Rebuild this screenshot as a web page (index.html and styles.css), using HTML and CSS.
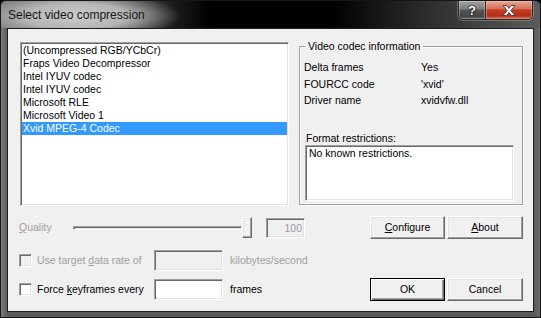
FILE: index.html
```html
<!DOCTYPE html>
<html lang="en">
<head>
    <meta charset="UTF-8">
    <title>Select video compression</title>
    <link rel="stylesheet" href="styles.css">
</head>
<body>
    <div class="window">
        <div class="titlebar">
            <span class="title">Select video compression</span>
            <div class="caption-btns">
                <span class="cap-btn help">?</span>
                <span class="cap-btn close">
                    <svg width="14" height="11" viewBox="0 0 14 11">
                        <path d="M1 0.5h3.6l2.4 2.9 2.4-2.9h3.6l-4.1 5 4.1 5h-3.6l-2.4-2.9-2.4 2.9H1l4.1-5z" fill="#fff" stroke="#3a2a26" stroke-width="0.8"/>
                    </svg>
                </span>
            </div>
        </div>
        <div class="frame">
            <div class="client">
                <div class="top">
                    <ul class="listbox">
                        <li>(Uncompressed RGB/YCbCr)</li>
                        <li>Fraps Video Decompressor</li>
                        <li>Intel IYUV codec</li>
                        <li>Intel IYUV codec</li>
                        <li>Microsoft RLE</li>
                        <li>Microsoft Video 1</li>
                        <li class="selected">Xvid MPEG-4 Codec</li>
                    </ul>
                    <div class="group">
                        <div class="group-title">Video codec information</div>
                        <div class="info">
                            <span>Delta frames</span><span>Yes</span>
                            <span>FOURCC code</span><span>'xvid'</span>
                            <span>Driver name</span><span>xvidvfw.dll</span>
                        </div>
                        <div class="restr-label">Format restrictions:</div>
                        <div class="edit restr-box">No known restrictions.</div>
                    </div>
                </div>

                <div class="row row-quality">
                    <span class="quality off-text"><u>Q</u>uality</span>
                    <div class="slider">
                        <div class="track"></div>
                        <div class="thumb"></div>
                    </div>
                    <div class="edit off num">100</div>
                    <div class="btns">
                        <button class="btn"><u>C</u>onfigure</button>
                        <button class="btn"><u>A</u>bout</button>
                    </div>
                </div>

                <div class="row row-rate">
                    <span class="edit off check"></span>
                    <span class="cb-label off-text">Use target <u>d</u>ata rate of</span>
                    <div class="edit off wide"></div>
                    <span class="unit off-text">kilobytes/second</span>
                </div>

                <div class="row row-key">
                    <span class="edit check"></span>
                    <span class="cb-label">Force <u>k</u>eyframes every</span>
                    <div class="edit wide"></div>
                    <span class="unit">frames</span>
                    <div class="btns">
                        <button class="btn btn-default">OK</button>
                        <button class="btn">Cancel</button>
                    </div>
                </div>
            </div>
        </div>
    </div>
</body>
</html>
```

FILE: styles.css
```css
*{
    margin: 0;
    padding: 0;
    box-sizing: border-box;
}
body{
    font-family: "Liberation Sans", Arial, sans-serif;
    font-size: 10.5px;
    color: #000;
    background: #000;
}
.window{
    width: 541px;
    height: 318px;
    border: 1px solid #161616;
    border-radius: 6px 6px 0 0;
    overflow: hidden;
    display: flex;
    flex-direction: column;
    background: #5e5e5e;
}

/* title bar */
.titlebar{
    height: 27px;
    display: flex;
    align-items: flex-start;
    padding: 0 7px;
    background:
        radial-gradient(ellipse 105px 26px at 74px 15px, #cdcdcd 0%, #b4b4b4 50%, rgba(0,0,0,0) 100%),
        linear-gradient(to right, #6e6e6e 0, #2c2c2c 150px, #000 210px, #000 330px, #2a2a2a 420px, #5c5c5c 100%);
}
.title{
    font-size: 12px;
    line-height: 16px;
    margin-top: 6px;
    color: #141414;
}
.caption-btns{
    margin-left: auto;
    display: flex;
    height: 19px;
    border: 1px solid #262626;
    border-top: none;
    border-radius: 0 0 5px 5px;
    overflow: hidden;
    box-shadow: 0 0 0 1px rgba(255,255,255,0.25);
}
.cap-btn{
    display: flex;
    align-items: center;
    justify-content: center;
    height: 100%;
}
.help{
    width: 27px;
    border-right: 1px solid #2a2a2a;
    background: linear-gradient(#a2a2a2 0%, #7c7c7c 45%, #545454 50%, #464646 85%, #5e5e5e 100%);
    box-shadow: inset 0 0 0 1px rgba(255,255,255,0.3);
    color: #fff;
    font-weight: bold;
    font-size: 13px;
    text-shadow: 0 0 1px #000, 0 0 1px #000, 0 0 2px #000;
}
.close{
    width: 46px;
    background: linear-gradient(#e7a596 0%, #d6705b 42%, #c43a20 50%, #b3301a 80%, #d8654d 100%);
    box-shadow: inset 0 0 0 1px rgba(255,220,210,0.35);
}

/* frame + client */
.frame{
    flex: 1;
    display: flex;
    padding: 0 6px 5px;
    background: linear-gradient(to right, #7c7c7c, #5a5a5a 6px, #5a5a5a calc(100% - 6px), #6c6c6c);
}
.client{
    flex: 1;
    display: flex;
    flex-direction: column;
    border: 1px solid #1c1c1c;
    background: #f0f0f0;
}
.top{
    display: flex;
    align-items: flex-start;
    gap: 10px;
    padding: 13px 0 0 12px;
}

/* sunken 3d edge */
.edit{
    background: #fff;
    border: 1px solid;
    border-color: #a0a0a0 #fff #fff #a0a0a0;
    box-shadow: inset 1px 1px #696969, inset -1px -1px #e3e3e3;
}
.edit.off{
    background: #f0f0f0;
}

.listbox{
    list-style: none;
    width: 269px;
    height: 164px;
    padding: 1px;
    background: #fff;
    border: 1px solid;
    border-color: #a0a0a0 #fff #fff #a0a0a0;
    box-shadow: inset 1px 1px #696969, inset -1px -1px #e3e3e3;
}
.listbox li{
    height: 13px;
    line-height: 13px;
    padding-left: 1px;
    white-space: nowrap;
}
.listbox li.selected{
    background: #3399ff;
    color: #fff;
}

.group{
    width: 224px;
    height: 159px;
    margin-top: 4px;
    padding: 0 4px;
    border: 1px solid #a0a0a0;
    box-shadow: inset 1px 1px #fff, 1px 1px #fff;
}
.group-title{
    width: fit-content;
    margin: -7px 0 0 1px;
    padding: 0 3px;
    line-height: 13px;
    background: #f0f0f0;
}
.info{
    display: grid;
    grid-template-columns: 117px auto;
    line-height: 16.5px;
    margin-top: 6px;
}
.restr-label{
    margin-top: 23px;
    padding-left: 2px;
    line-height: 13px;
}
.restr-box{
    width: 209px;
    height: 56px;
    margin-left: 1px;
    padding: 1px 3px;
    line-height: 13px;
}

/* bottom rows */
.row{
    display: flex;
    align-items: center;
    padding: 0 10px 0 11px;
    line-height: 13px;
    white-space: nowrap;
}
.row-quality{
    height: 23px;
    margin-top: 10px;
}
.row-rate{
    height: 21px;
    margin-top: 11px;
}
.row-key{
    height: 23px;
    margin-top: 7px;
}
.off-text{
    color: #a0a0a0;
}
.quality{
    width: 54px;
}
.slider{
    width: 178.5px;
    height: 21px;
    display: flex;
    align-items: center;
}
.track{
    flex: 1;
    height: 4px;
    border: 1px solid;
    border-color: #a0a0a0 #fff #fff #a0a0a0;
    box-shadow: inset 1px 1px #696969;
    background: #e3e3e3;
}
.thumb{
    width: 10px;
    height: 21px;
    border: 1px solid;
    border-color: #fff #696969 #696969 #fff;
    box-shadow: inset -1px -1px #a0a0a0, inset 1px 1px #e3e3e3;
    background: repeating-conic-gradient(#fff 0 25%, #e4e4e4 0 50%) 0 0 / 2px 2px;
}
.num{
    width: 39.5px;
    height: 20px;
    margin-left: 14px;
    padding: 0 2px;
    text-align: right;
    line-height: 18px;
    color: #9a9aa6;
}
.check{
    width: 13px;
    height: 13px;
}
.cb-label{
    width: 117px;
    margin-left: 5px;
}
.wide{
    width: 68.5px;
    height: 21px;
}
.unit{
    margin-left: 7.5px;
}
.btns{
    margin-left: auto;
    display: flex;
    gap: 2px;
}
.btn{
    width: 75px;
    height: 23px;
    font: inherit;
    color: #000;
    background: #f0f0f0;
    border: 1px solid;
    border-color: #fff #696969 #696969 #fff;
    box-shadow: inset -1px -1px #a0a0a0, inset 1px 1px #e3e3e3;
}
.btn + .btn{
    width: 76px;
}
.btn-default{
    border-color: #000;
    box-shadow: inset 1px 1px #fff, inset -1px -1px #696969, inset -2px -2px #a0a0a0;
}
```
